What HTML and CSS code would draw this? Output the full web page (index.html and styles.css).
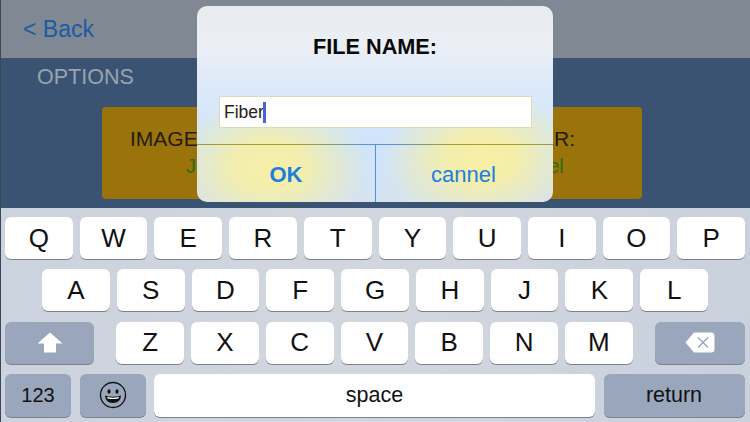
FILE: index.html
```html
<!DOCTYPE html>
<html lang="en">
<head>
<meta charset="utf-8">
<title>File name</title>
<link rel="stylesheet" href="styles.css">
</head>
<body>
<div class="screen">
  <header class="topbar"><span class="back">&lt; Back</span></header>
  <main class="options">
    <div class="options-title">OPTIONS</div>
    <div class="card">
      <div class="card-col">
        <div class="card-label">IMAGE FORMAT:</div>
        <div class="card-value">JPEG</div>
      </div>
      <div class="card-col">
        <div class="card-label">NUMBER:</div>
        <div class="card-value">Channel</div>
      </div>
    </div>
  </main>
  <section class="keyboard">
    <div class="row">
      <div class="key">Q</div><div class="key">W</div><div class="key">E</div><div class="key">R</div><div class="key">T</div><div class="key">Y</div><div class="key">U</div><div class="key">I</div><div class="key">O</div><div class="key">P</div>
    </div>
    <div class="row row-inset">
      <div class="key">A</div><div class="key">S</div><div class="key">D</div><div class="key">F</div><div class="key">G</div><div class="key">H</div><div class="key">J</div><div class="key">K</div><div class="key">L</div>
    </div>
    <div class="row row-third">
      <div class="key key-mod key-shift">
        <svg width="26" height="21" viewBox="0 0 26 21"><path d="M13 .5 25.5 11.5H19V20.500H7V11.500H.5Z" fill="#fff"/></svg>
      </div>
      <div class="letters">
        <div class="key">Z</div><div class="key">X</div><div class="key">C</div><div class="key">V</div><div class="key">B</div><div class="key">N</div><div class="key">M</div>
      </div>
      <div class="key key-mod key-delete">
        <svg width="30" height="21" viewBox="0 0 30 21"><path d="M9 .5H26Q29.500 .5 29.500 4V17Q29.500 20.500 26 20.500H9L.5 10.500Z" fill="#fff"/><path d="M13 5.500 23 15.500M23 5.500 13 15.500" stroke="#98a4b8" stroke-width="1.300" fill="none"/></svg>
      </div>
    </div>
    <div class="row row-bottom">
      <div class="key key-mod key-small key-num">123</div>
      <div class="key key-mod key-small">
        <svg width="28" height="28" viewBox="0 0 28 28"><circle cx="14" cy="14" r="12.500" fill="none" stroke="#111" stroke-width="1.300"/><ellipse cx="10" cy="10.500" rx="1.500" ry="2.300" fill="#111"/><ellipse cx="18" cy="10.500" rx="1.500" ry="2.300" fill="#111"/><path d="M6 14.500Q14 17 22 14.500 21.500 22 14 22 6.500 22 6 14.500Z" fill="#111"/><path d="M8 16Q14 17.500 20 16L19.500 17.500Q14 18.500 8.500 17.500Z" fill="#fff"/></svg>
      </div>
      <div class="key key-space">space</div>
      <div class="key key-mod key-return">return</div>
    </div>
  </section>
  <div class="dialog">
    <h1 class="dialog-title">FILE NAME:</h1>
    <div class="field"><span>Fiber</span><i class="caret"></i></div>
    <div class="actions">
      <div class="action action-ok">OK</div>
      <div class="action action-cancel">cannel</div>
    </div>
  </div>
</div>
</body>
</html>
```
FILE: styles.css
```css
* { box-sizing: border-box; }
html, body { margin: 0; padding: 0; }
body { width: 750px; height: 422px; overflow: hidden; font-family: "Liberation Sans", Arial, sans-serif; background: #cdd4df; }
.screen { position: relative; width: 750px; height: 422px; display: flex; flex-direction: column; overflow: hidden; border-left: 1px solid #3b4658; }
.topbar { height: 58px; flex: none; background: #808894; padding: 16px 0 0 22px; }
.back { font-size: 23px; line-height: 27px; color: #1c5aa3; }
.options { height: 150px; flex: none; background: #3a5373; padding: 6px 0 0 36px; }
.options-title { font-size: 21.500px; line-height: 27px; color: #9aa3af; }
.card { margin: 16px 0 0 65px; width: 540px; height: 92px; background: #9a730b; border-radius: 4px; display: flex; justify-content: space-between; padding: 19px 67px 0 28px; }
.card-col { display: flex; flex-direction: column; align-items: center; font-size: 21px; line-height: 26px; }
.card-label { color: #231c0c; }
.card-value { color: #2f6a0f; margin-top: 1px; font-size: 20px; }
.keyboard { flex: 1; padding: 9px 5px 0 4px; display: flex; flex-direction: column; gap: 10.300px; background: linear-gradient(100deg, #cbd3de 0%, #d2d6de 50%, #c9d1dd 100%); }
.row { display: flex; gap: 7px; height: 42px; flex: none; }
.row-inset { padding: 0 37px; }
.row-third { justify-content: space-between; }
.letters { display: flex; gap: 7px; flex: none; }
.letters .key { width: 67.800px; flex: none; }
.key { flex: 1; background: #fff; border-radius: 6px; box-shadow: 0 1px 0 #7c818a; display: flex; align-items: center; justify-content: center; font-size: 26px; color: #111; }
.key-mod { background: #99a6bb; }
.key-shift { flex: none; width: 89px; }
.key-delete { flex: none; width: 90px; }
.row-bottom { gap: 8.500px; height: 43px; }
.key-small { flex: none; width: 66px; }
.key-num { font-size: 20px; }
.key-space { flex: none; width: 441px; font-size: 21.500px; }
.key-return { flex: none; width: 141px; font-size: 21.500px; }
.dialog { position: absolute; left: 196px; top: 6px; width: 356px; height: 196px; border-radius: 10px; overflow: hidden; display: flex; flex-direction: column; background:
  radial-gradient(ellipse 100px 68px at 72px 160px, #f6efa6 0%, rgba(246,239,166,.9) 35%, rgba(246,239,166,0) 100%),
  radial-gradient(ellipse 100px 68px at 285px 152px, #f7efa4 0%, rgba(247,239,164,.9) 35%, rgba(247,239,164,0) 100%),
  linear-gradient(180deg, #e8ebef 0%, #ebeff5 20%, #dbe9fa 42%, #cfe4fb 70%, #d6e3ef 100%); }
.dialog-title { margin: 0; height: 90px; padding-top: 27px; text-align: center; font-size: 21.700px; line-height: 27px; font-weight: 700; color: #0a0a0a; }
.field { margin: 0 21px 0 22px; height: 32px; flex: none; background: #fff; border: 1px solid #dcdfb4; display: flex; align-items: center; padding-left: 4px; font-size: 17.500px; color: #222; }
.caret { width: 3px; height: 21px; background: #4a63cf; margin-left: -1px; }
.actions { margin-top: 16px; flex: 1; display: flex; border-top: 1px solid; border-image: linear-gradient(90deg, #a89c2c 0%, #a89c2c 30%, #5b93d0 48%, #5b93d0 56%, #a89c2c 72%, #a89c2c 100%) 1; }
.action { flex: 1; display: flex; align-items: center; justify-content: center; padding-top: 2px; color: #1b7fde; font-size: 22px; }
.action-ok { flex: none; width: 179px; border-right: 1px solid #4f8fdc; font-weight: 700; }
.action-cancel { padding-right: 2px; }
```
